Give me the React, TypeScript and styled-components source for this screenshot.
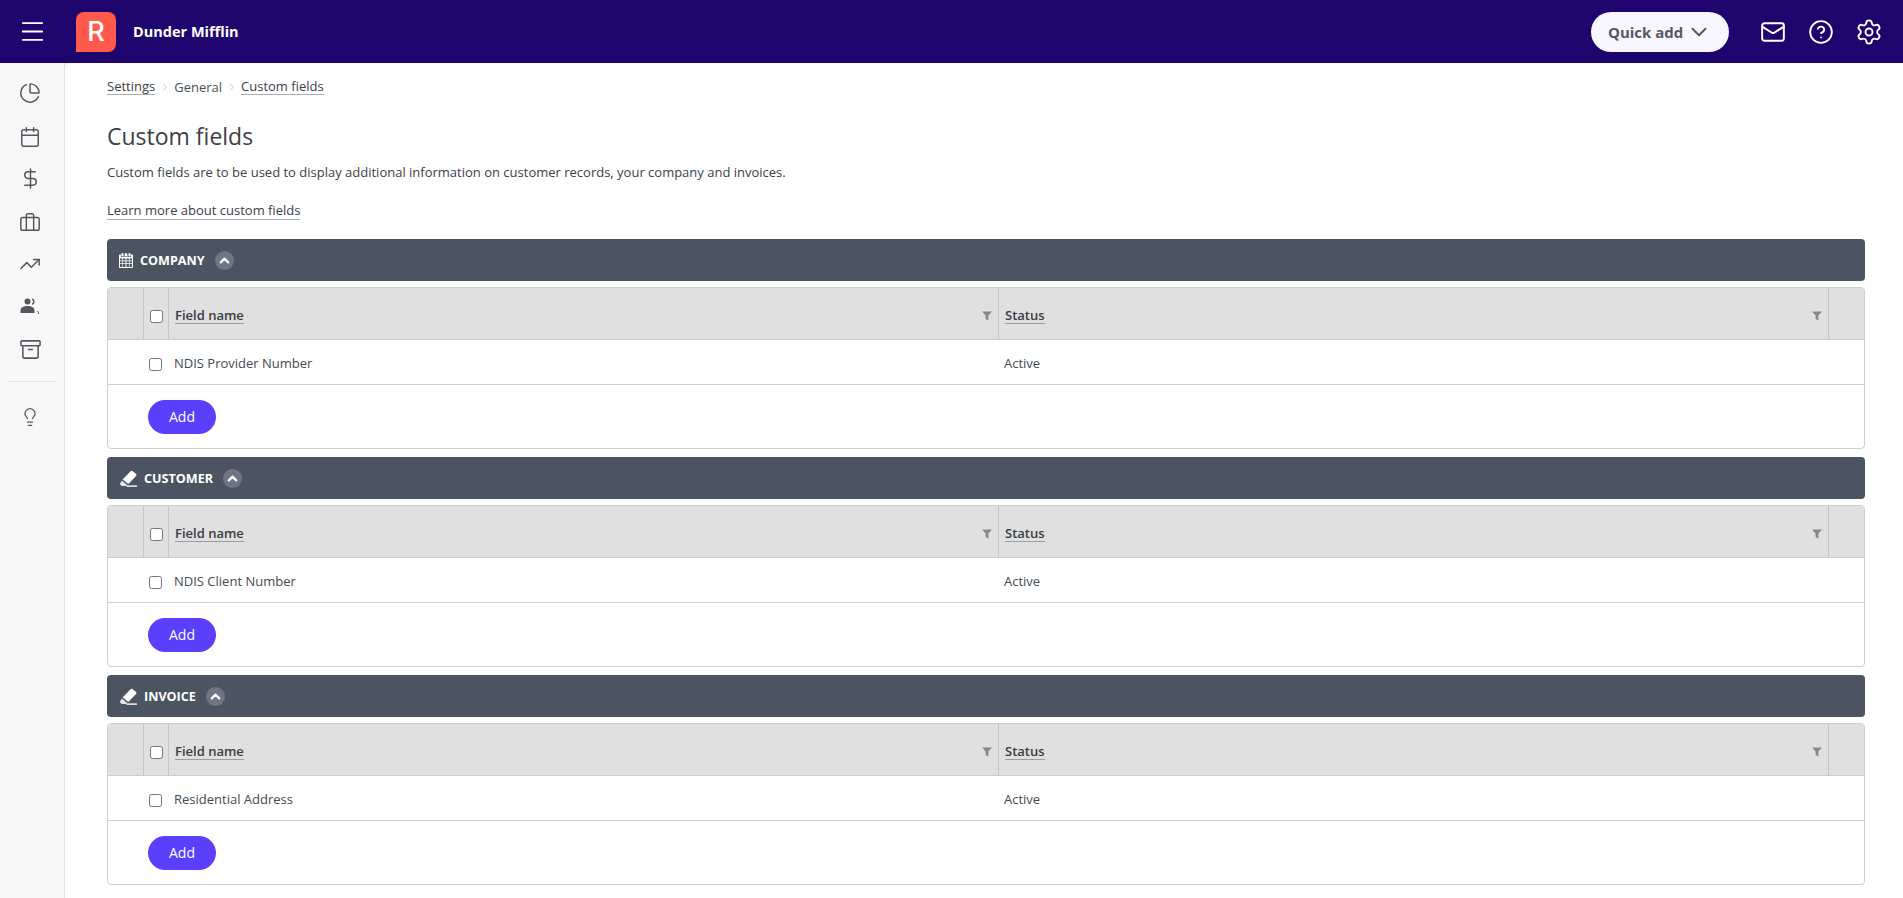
import React from "react";
import styled, { createGlobalStyle } from "styled-components";
import { Archive, Briefcase, Calendar, ChevronDown, ChevronRight, ChevronUp, CircleHelp, DollarSign, Lightbulb, Mail, Menu, PieChart, Settings, TrendingUp } from "lucide-react";

const Global = createGlobalStyle`
  html, body { margin: 0; padding: 0; background: #f8f8f9; }
  body { font-family: "Open Sans", "Liberation Sans", sans-serif; color: #3b4149; font-size: 13px; }
  * { box-sizing: border-box; }
`;
const Page = styled.div`width: 1903px; height: 898px; overflow: hidden; display: flex; flex-direction: column;`;
const TopBar = styled.header`height: 63px; flex: none; background: #1e056d; display: flex; align-items: center; color: #fff;`;
const Burger = styled.button`all: unset; width: 64px; display: flex; justify-content: center; color: #fff;`;
const Logo = styled.div`width: 40px; height: 40px; margin-left: 12px; background: #ff5a4b; border-radius: 8px 8px 8px 0; display: flex; align-items: center; justify-content: center; font: 500 27px "Inter", sans-serif; color: #fff;`;
const Brand = styled.div`margin-left: 17px; font-weight: 700; font-size: 14.5px; flex: 1;`;
const QuickAdd = styled.button`all: unset; width: 138px; height: 40px; border-radius: 20px; background: #f8f6fe; color: #57595f; display: flex; align-items: center; gap: 3px; font-weight: 700; font-size: 15px; padding-left: 17px; box-sizing: border-box;`;
const TopIcons = styled.div`display: flex; align-items: center; margin: 0 10px 0 20px; color: #fff;`;
const TopIcon = styled.span`display: flex; width: 48px; justify-content: center;`;
const Body = styled.div`flex: 1; display: flex; min-height: 0;`;
const Side = styled.nav`width: 65px; flex: none; background: #f8f8f9; border-right: 1px solid #e1e1ea; display: flex; flex-direction: column; align-items: center; padding-top: 7px; color: #54575f;`;
const SideItem = styled.div<{ $nudge?: number }>`height: 43px; width: 100%; flex: none; display: flex; justify-content: center; align-items: center; padding-right: 4px; padding-top: ${(p) => p.$nudge ?? 0}px;`;
const SideRule = styled.div`width: 48px; height: 1px; background: #e3e3e6; margin: 10px 1px 13px 0;`;
const Main = styled.main`flex: 1; background: #fff; padding: 15px 38px 0 42px; border-top-left-radius: 8px; min-width: 0;`;
const Crumbs = styled.div`display: flex; align-items: center; height: 18px; font-size: 13px; line-height: 18px;`;
const CrumbLink = styled.span`border-bottom: 1px solid #a9abb0; line-height: 15px; color: #3b4149;`;
const CrumbPlain = styled.span`color: #4a4f56;`;
const CrumbSep = styled.span`display: flex; width: 19px; justify-content: center; color: #c4c4c8;`;
const Title = styled.h1`margin: 24px 0 0; font-weight: 400; font-size: 23px; line-height: 33px; color: #3a3f46;`;
const Intro = styled.p`margin: 10px 0 0; font-size: 13px; line-height: 18px;`;
const LearnRow = styled.div`margin-top: 21px; height: 18px; display: flex;`;
const Learn = styled.span`border-bottom: 1px solid #a9abb0; line-height: 17px; height: 18px;`;
const Sections = styled.div`margin-top: 19px; display: flex; flex-direction: column; gap: 8px;`;
const Section = styled.section`display: flex; flex-direction: column; gap: 6px;`;
const SectionHead = styled.div`height: 42px; background: #4a5561; border-radius: 4px; display: flex; align-items: center; padding-left: 12px; color: #fff; font-weight: 700; font-size: 12.6px; text-transform: uppercase; gap: 7px;`;
const Toggle = styled.span`width: 19px; height: 19px; border-radius: 50%; background: #6f7683; margin-left: 3px; display: flex; align-items: center; justify-content: center; color: #fff;`;
const Card = styled.div`height: 162px; border: 1px solid #cfcfcf; border-radius: 4px; display: flex; flex-direction: column; background: #fff;`;
const Grid = styled.div`display: grid; grid-template-columns: 36px 24px 831px 1fr 35px;`;
const HeadRow = styled(Grid)`height: 52px; background: #e0e0e0; border-bottom: 1px solid #cdcdcd; border-radius: 3px 3px 0 0;`;
const HeadCell = styled.div<{ $edge?: boolean; $lead?: boolean }>`display: flex; align-items: center; justify-content: space-between; padding: 4px 6px 0 6px; border-right: ${(p) => (p.$edge ? "1px solid #c4c4c4" : "none")}; border-left: ${(p) => (p.$lead ? "1px solid #c4c4c4" : "none")};`;
const HeadLabel = styled.span`font-weight: 600; font-size: 13px; line-height: 15px; border-bottom: 1px solid #9b9da1; color: #383d44;`;
const Check = styled.span`width: 13px; height: 13px; background: #fff; border: 1px solid #767676; border-radius: 2.5px; display: block;`;
const CheckCell = styled.div`display: flex; align-items: center; justify-content: center; padding: 6px 0 0 1px;`;
const Row = styled(Grid)`height: 45px; border-bottom: 1px solid #cfcfcf; align-items: center;`;
const RowCell = styled.div<{ $pad: number }>`padding: 2px 0 0 ${(p) => p.$pad}px; font-size: 13px; color: #454a51;`;
const RowCheck = styled.div`display: flex; align-items: center; justify-content: center; padding: 5px 1px 0 0;`;
const Foot = styled.div`flex: 1; padding: 15px 0 0 40px;`;
const AddBtn = styled.button`all: unset; width: 68px; height: 34px; border-radius: 17px; background: #5a3ffc; color: #fff; display: flex; align-items: center; justify-content: center; font-size: 14px; font-weight: 500; padding-bottom: 1px; box-sizing: border-box;`;

const Filter = () => (
  <svg width="10" height="10" viewBox="0 0 10 10"><path d="M0 .5h10L6.4 4.6v5L3.6 8V4.6z" fill="#85888e" /></svg>
);
const CalendarGlyph = () => (
  <svg width="14" height="15" viewBox="0 0 14 15" fill="#fff">
    <rect x="2.5" y="0" width="2" height="3.5" rx=".8" />
    <rect x="6" y="0" width="2" height="3.5" rx=".8" />
    <rect x="9.5" y="0" width="2" height="3.5" rx=".8" />
    <path fillRule="evenodd" d="M1 1.6h1v2.4h3V1.6h.5v2.4h3V1.6h.5v2.4h3V1.6h1c.6 0 1 .4 1 1V14c0 .6-.4 1-1 1H1c-.6 0-1-.4-1-1V2.6c0-.6.4-1 1-1zM1 5.5v2h2.4v-2zM4.1 5.5v2h2.4v-2zM7.5 5.5v2h2.4v-2zM10.6 5.5v2H13v-2zM1 8.2v2h2.4v-2zM4.1 8.2v2h2.4v-2zM7.5 8.2v2h2.4v-2zM10.6 8.2v2H13v-2zM1 11v2.9h2.4V11zM4.1 11v2.9h2.4V11zM7.5 11v2.9h2.4V11zM10.6 11v2.9H13V11z" />
  </svg>
);
const Highlight = () => (
  <svg width="18" height="17" viewBox="0 0 18 17" fill="#fff">
    <path d="M3.6 9.4 11.4 1.4c.6-.7 1.5-.8 2.2-.2l3.3 2.6c.7.6.7 1.5.1 2.2L9.4 14z" />
    <path d="M2.8 10.6 8.2 15 7.2 16H2.6L.8 14z" opacity=".85" />
    <rect x="7.5" y="15.4" width="10.5" height="1.4" />
  </svg>
);
const PeopleIcon = () => (
  <svg width="20" height="17" viewBox="0 0 20 17" fill="#54575f">
    <circle cx="7.5" cy="3.4" r="3" />
    <path d="M.5 15v-2.6C.5 9.6 3.2 8 7.5 8s7 1.6 7 4.4V15z" />
    <path d="M12.3 .8a3.3 3.3 0 0 1 0 5.6" fill="none" stroke="#54575f" strokeWidth="1.5" />
    <path d="M17.6 13c.6.7.9 1.6 1 3" fill="none" stroke="#54575f" strokeWidth="1" />
  </svg>
);

const sections = [
  { name: "Company", icon: <CalendarGlyph />, row: "NDIS Provider Number" },
  { name: "Customer", icon: <Highlight />, row: "NDIS Client Number" },
  { name: "Invoice", icon: <Highlight />, row: "Residential Address" },
];

export default function App() {
  return (
    <Page>
      <Global />
      <TopBar>
        <Burger><Menu size={29} strokeWidth={1.5} /></Burger>
        <Logo>R</Logo>
        <Brand>Dunder Mifflin</Brand>
        <QuickAdd>Quick add <ChevronDown size={26} strokeWidth={1.8} /></QuickAdd>
        <TopIcons>
          <TopIcon><Mail size={26} strokeWidth={1.8} /></TopIcon>
          <TopIcon><CircleHelp size={26} strokeWidth={1.7} /></TopIcon>
          <TopIcon><Settings size={28} strokeWidth={1.6} /></TopIcon>
        </TopIcons>
      </TopBar>
      <Body>
        <Side>
          <SideItem $nudge={2}><PieChart size={22} strokeWidth={1.6} /></SideItem>
          <SideItem $nudge={4}><Calendar size={22} strokeWidth={1.6} /></SideItem>
          <SideItem $nudge={2}><DollarSign size={23} strokeWidth={1.6} /></SideItem>
          <SideItem $nudge={4}><Briefcase size={22} strokeWidth={1.6} /></SideItem>
          <SideItem><TrendingUp size={22} strokeWidth={1.6} /></SideItem>
          <SideItem><PeopleIcon /></SideItem>
          <SideItem><Archive size={23} strokeWidth={1.6} /></SideItem>
          <SideRule />
          <SideItem><Lightbulb size={20} strokeWidth={1.5} /></SideItem>
        </Side>
        <Main>
          <Crumbs>
            <CrumbLink>Settings</CrumbLink>
            <CrumbSep><ChevronRight size={12} /></CrumbSep>
            <CrumbPlain>General</CrumbPlain>
            <CrumbSep><ChevronRight size={12} /></CrumbSep>
            <CrumbLink>Custom fields</CrumbLink>
          </Crumbs>
          <Title>Custom fields</Title>
          <Intro>Custom fields are to be used to display additional information on customer records, your company and invoices.</Intro>
          <LearnRow><Learn>Learn more about custom fields</Learn></LearnRow>
          <Sections>
            {sections.map((s) => (
              <Section key={s.name}>
                <SectionHead>
                  {s.icon}
                  <span>{s.name}</span>
                  <Toggle><ChevronUp size={15} strokeWidth={3.4} /></Toggle>
                </SectionHead>
                <Card>
                  <HeadRow>
                    <HeadCell $edge />
                    <CheckCell><Check /></CheckCell>
                    <HeadCell $edge $lead>
                      <HeadLabel>Field name</HeadLabel><Filter />
                    </HeadCell>
                    <HeadCell $edge>
                      <HeadLabel>Status</HeadLabel><Filter />
                    </HeadCell>
                    <HeadCell />
                  </HeadRow>
                  <Row>
                    <div />
                    <RowCheck><Check /></RowCheck>
                    <RowCell $pad={6}>{s.row}</RowCell>
                    <RowCell $pad={5}>Active</RowCell>
                    <div />
                  </Row>
                  <Foot><AddBtn>Add</AddBtn></Foot>
                </Card>
              </Section>
            ))}
          </Sections>
        </Main>
      </Body>
    </Page>
  );
}
